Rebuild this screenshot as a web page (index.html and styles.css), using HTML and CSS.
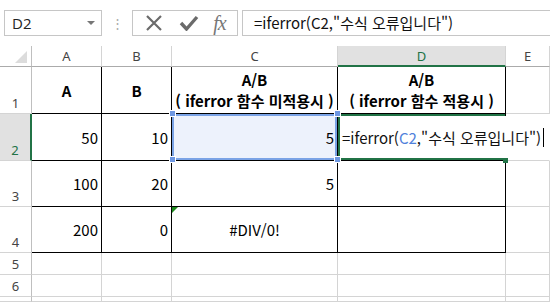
FILE: index.html
```html
<!DOCTYPE html>
<html lang="ko">
<head>
  <meta charset="UTF-8">
  <title>IFERROR 예제</title>
  <link rel="stylesheet" href="styles.css">
</head>
<body>

  <div class="formula-row">
    <div class="name-box">
      <span>D2</span>
      <span class="drop"></span>
    </div>
    <div class="grip">&#8942;</div>
    <div class="fx-buttons">
      <svg width="20" height="16" viewBox="0 0 20 16"><path d="M3 1 L17 15 M17 1 L3 15" stroke="#6b6b6b" stroke-width="2.2" fill="none"/></svg>
      <svg width="20" height="16" viewBox="0 0 20 16"><path d="M2 8 L7.5 14 L18 2" stroke="#6b6b6b" stroke-width="3.4" fill="none" stroke-linejoin="miter"/></svg>
      <span class="fx">fx</span>
    </div>
    <div class="formula-input">=iferror(C2,"수식 오류입니다")</div>
  </div>

  <div class="sheet">
    <!-- column headers -->
    <div class="corner"><span class="tri"></span></div>
    <div class="hd">A</div>
    <div class="hd">B</div>
    <div class="hd">C</div>
    <div class="hd hd-active">D</div>
    <div class="hd">E</div>

    <!-- row 1 -->
    <div class="rh">1</div>
    <div class="c t title">A</div>
    <div class="c t title">B</div>
    <div class="c t title">A/B<br>( iferror 함수 미적용시 )</div>
    <div class="c t title">A/B<br>( iferror 함수 적용시 )</div>
    <div class="c"></div>

    <!-- row 2 -->
    <div class="rh rh-active">2</div>
    <div class="c t num">50</div>
    <div class="c t num">10</div>
    <div class="c t num ref">5
      <span class="h h-tl"></span><span class="h h-tr"></span><span class="h h-bl"></span><span class="h h-br"></span>
    </div>
    <div class="c t editing">
      <span class="editor">=iferror(<span class="refc">C2</span>,"수식 오류입니다")<span class="caret"></span></span>
      <span class="fill-handle"></span>
    </div>
    <div class="c no-left"></div>

    <!-- row 3 -->
    <div class="rh">3</div>
    <div class="c t num">100</div>
    <div class="c t num">20</div>
    <div class="c t num">5</div>
    <div class="c t"></div>
    <div class="c"></div>

    <!-- row 4 -->
    <div class="rh">4</div>
    <div class="c t num">200</div>
    <div class="c t num">0</div>
    <div class="c t mid"><span class="err"></span>#DIV/0!</div>
    <div class="c t"></div>
    <div class="c"></div>

    <!-- rows 5-7 (7 is cut off by the window) -->
    <div class="rh">5</div>
    <div class="c"></div><div class="c"></div><div class="c"></div><div class="c"></div><div class="c"></div>
    <div class="rh">6</div>
    <div class="c"></div><div class="c"></div><div class="c"></div><div class="c"></div><div class="c"></div>
    <div class="rh"></div>
    <div class="c"></div><div class="c"></div><div class="c"></div><div class="c"></div><div class="c"></div>
  </div>

</body>
</html>
```

FILE: styles.css
```css
html, body {
  margin: 0; padding: 0;
  background: #fff;
  width: 550px; height: 302px;
  overflow: hidden;
  font-family: "Noto Sans CJK KR", "Noto Sans", sans-serif;
  color: #000;
}

/* formula bar */
.formula-row {
  height: 46px;
  display: flex;
  align-items: flex-start;
  padding-top: 10px;
  box-sizing: border-box;
}
.name-box {
  margin-left: 4px;
  width: 98px; height: 26px;
  box-sizing: border-box;
  border: 1px solid #c6c6c6;
  display: flex;
  align-items: center;
  justify-content: space-between;
  padding: 0 6px 0 7px;
  font-family: "Open Sans", "Noto Sans", sans-serif;
  font-size: 15px;
  color: #222;
}
.drop {
  width: 0; height: 0;
  border-left: 4px solid transparent;
  border-right: 4px solid transparent;
  border-top: 4px solid #777;
}
.grip {
  width: 30px;
  text-align: center;
  color: #aaa;
  font-size: 13px;
  line-height: 26px;
}
.fx-buttons {
  width: 106px; height: 26px;
  box-sizing: border-box;
  border: 1px solid #c6c6c6;
  display: flex;
  align-items: center;
  justify-content: space-around;
  padding: 0 4px;
}
.fx {
  font-family: "Liberation Serif", serif;
  font-style: italic;
  font-size: 20px;
  color: #777;
  line-height: 1;
  letter-spacing: -1px;
}
.formula-input {
  margin-left: 4px;
  flex: 1;
  height: 26px;
  box-sizing: border-box;
  border: 1px solid #c6c6c6;
  border-right: none;
  padding-left: 11px;
  font-size: 15px;
  line-height: 23px;
  color: #111;
}

/* sheet grid */
.sheet {
  display: grid;
  grid-template-columns: 32px 70px 70px 166px 168px 1fr;
  grid-template-rows: 21px 47px 47px 46px 46px 22px 22px 1fr;
  height: 256px;
}
.corner {
  position: relative;
  border-right: 1px solid #bfbfbf;
  border-bottom: 1px solid #ababab;
}
.tri {
  position: absolute;
  right: 4px; bottom: 3px;
  width: 0; height: 0;
  border-left: 12px solid transparent;
  border-bottom: 12px solid #dcdcdc;
}
.hd {
  border-right: 1px solid #d4d4d4;
  border-bottom: 1px solid #ababab;
  display: flex;
  align-items: center;
  justify-content: center;
  font-family: "Noto Sans", sans-serif;
  font-size: 13px;
  color: #444;
}
.hd-active {
  background: #e1e1e1;
  color: #217346;
  border-bottom: 2px solid #217346;
}
.rh {
  border-right: 1px solid #bfbfbf;
  border-bottom: 1px solid #d4d4d4;
  display: flex;
  align-items: flex-end;
  justify-content: center;
  padding-bottom: 1px;
  font-family: "Noto Sans", sans-serif;
  font-size: 13px;
  color: #444;
  box-sizing: border-box;
}
.rh-active {
  background: #e1e1e1;
  color: #217346;
  border-right: 2px solid #217346;
}

.c {
  position: relative;
  border-right: 1px solid #d4d4d4;
  border-bottom: 1px solid #d4d4d4;
  font-size: 15px;
  display: flex;
  align-items: center;
}
.c.t {
  border-right-color: #000;
  border-bottom-color: #000;
}
.title {
  justify-content: center;
  text-align: center;
  font-weight: bold;
  line-height: 21px;
}
.num {
  justify-content: flex-end;
  padding-right: 3px;
}
.mid {
  justify-content: center;
}

/* referenced range C2 */
.ref {
  background: #edf2fc;
  box-shadow: inset 0 0 0 2px #7aa3e6;
}
.h {
  position: absolute;
  width: 5px; height: 5px;
  background: #6d97e2;
  border: 1px solid #fff;
  z-index: 2;
}
.h-tl { left: -3px; top: -4px; }
.h-tr { right: -4px; top: -4px; }
.h-bl { left: -3px; bottom: -3px; }
.h-br { right: -4px; bottom: -3px; }

/* active cell being edited */
.editing {
  box-shadow: inset 2px 2px 0 #217346, inset 0 -2px 0 #217346;
  border-right-color: transparent;
}
.editor {
  position: absolute;
  left: 2px; top: 2px; bottom: 2px;
  width: 210px;
  background: #fff;
  display: flex;
  align-items: center;
  padding-left: 2px;
  white-space: nowrap;
  z-index: 3;
  color: #111;
}
.refc { color: #4f81db; }
.caret {
  display: inline-block;
  width: 1px; height: 19px;
  background: #000;
  margin-left: 2px;
}
.fill-handle {
  position: absolute;
  right: -3px; bottom: -3px;
  width: 5px; height: 5px;
  background: #217346;
  z-index: 4;
}
.no-left { border-right-color: transparent; }

.err {
  position: absolute;
  left: 0; top: 0;
  width: 0; height: 0;
  border-top: 6px solid #1e8a1e;
  border-right: 6px solid transparent;
}
```
